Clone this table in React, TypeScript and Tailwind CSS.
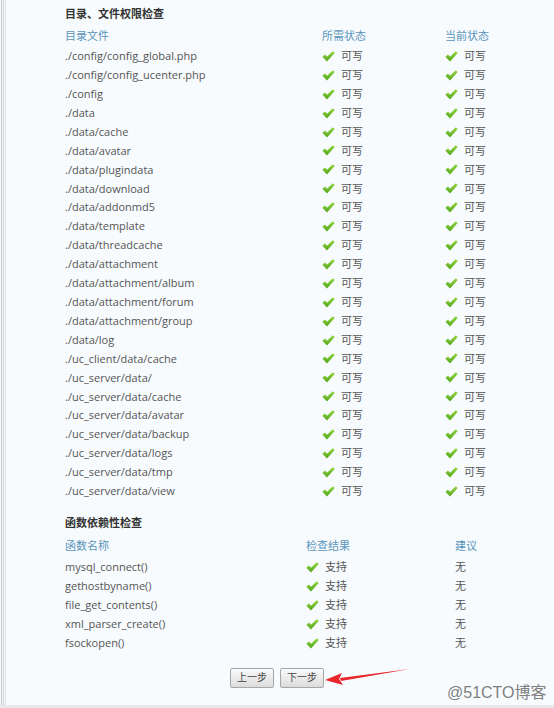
import React from "react";

const dirs = [
  "./config/config_global.php",
  "./config/config_ucenter.php",
  "./config",
  "./data",
  "./data/cache",
  "./data/avatar",
  "./data/plugindata",
  "./data/download",
  "./data/addonmd5",
  "./data/template",
  "./data/threadcache",
  "./data/attachment",
  "./data/attachment/album",
  "./data/attachment/forum",
  "./data/attachment/group",
  "./data/log",
  "./uc_client/data/cache",
  "./uc_server/data/",
  "./uc_server/data/cache",
  "./uc_server/data/avatar",
  "./uc_server/data/backup",
  "./uc_server/data/logs",
  "./uc_server/data/tmp",
  "./uc_server/data/view",
];

const funcs = [
  "mysql_connect()",
  "gethostbyname()",
  "file_get_contents()",
  "xml_parser_create()",
  "fsockopen()",
];

function Check() {
  return (
    <svg width="13" height="11" viewBox="0 0 13 11" className="shrink-0">
      <defs>
        <linearGradient id="ck" x1="0" y1="0" x2="0" y2="1">
          <stop offset="0" stopColor="#92d63f" />
          <stop offset="1" stopColor="#52a61a" />
        </linearGradient>
      </defs>
      <path d="M0.4 5.8 L3 3.5 L5 5.8 L10.8 0.2 L12.7 2 L5 10.6 Z" fill="url(#ck)" strokeLinejoin="round" />
    </svg>
  );
}

function Status({ label }: { label: string }) {
  return (
    <div className="flex items-center gap-[6px]">
      <Check />
      <span>{label}</span>
    </div>
  );
}

export default function App() {
  return (
    <div
      className="relative w-[554px] h-[708px] bg-[#f7fbfe] flex overflow-hidden text-[11px] text-[#555]"
      style={{ fontFamily: '"Open Sans", "Noto Sans CJK SC", sans-serif' }}
    >
      {/* left frame lines */}
      <div className="flex h-full shrink-0">
        <div className="w-[1px] bg-[#f7fbfe]" />
        <div className="w-[1px] bg-[#c9cdd1]" />
        <div className="w-[1px] bg-[#f0f3f5]" />
        <div className="w-[1px] bg-[#d3d7da]" />
        <div className="w-[1px] bg-[#f7fbfe]" />
        <div className="w-[1px] bg-[#dde1e4]" />
      </div>

      <div className="flex-1 pl-[59px] pt-[4px]">
        <div className="h-[19px] leading-[19px] font-bold text-[#333]">目录、文件权限检查</div>
        <div className="grid grid-cols-[257px_123px_1fr] text-[#5a94bb] h-[23px] leading-[23px] mt-[1px]">
          <span>目录文件</span>
          <span>所需状态</span>
          <span>当前状态</span>
        </div>
        <div className="mt-[0px]">
          {dirs.map((d) => (
            <div key={d} className="grid grid-cols-[257px_123px_1fr] h-[18.92px] items-center">
              <span>{d}</span>
              <Status label="可写" />
              <Status label="可写" />
            </div>
          ))}
        </div>

        <div className="mt-[12px] h-[19px] leading-[19px] font-bold text-[#333]">函数依赖性检查</div>
        <div className="grid grid-cols-[241px_149px_1fr] text-[#5a94bb] h-[23px] leading-[23px] mt-[2px]">
          <span>函数名称</span>
          <span>检查结果</span>
          <span>建议</span>
        </div>
        <div className="mt-[1px]">
          {funcs.map((f) => (
            <div key={f} className="grid grid-cols-[241px_149px_1fr] h-[19px] items-center">
              <span>{f}</span>
              <Status label="支持" />
              <span>无</span>
            </div>
          ))}
        </div>

        <div className="flex gap-[6px] mt-[15px] pl-[165px]">
          <button className="w-[44px] h-[20px] border border-[#a7a7a7] rounded-[2px] bg-gradient-to-b from-[#fafafa] to-[#dcdcdc] text-[10px] text-[#444]">
            上一步
          </button>
          <button className="w-[44px] h-[20px] border border-[#a7a7a7] rounded-[2px] bg-gradient-to-b from-[#fafafa] to-[#dcdcdc] text-[10px] text-[#444]">
            下一步
          </button>
        </div>
      </div>

      {/* red arrow annotation */}
      <svg className="absolute left-[322px] top-[666px]" width="90" height="22" viewBox="0 0 90 22">
        <path d="M88 3 L18 12 L19 15 Z" fill="#e8262a" />
        <path d="M3 14 L20 7 L17 13 L21 19 Z" fill="#e8262a" />
      </svg>

      <div
        className="absolute left-[447px] top-[681px] text-[16px] text-[#808080]"
        style={{ fontFamily: '"Liberation Sans", "Noto Sans CJK SC", sans-serif' }}
      >
        @51CTO博客
      </div>

      <div className="absolute left-0 right-0 bottom-0 h-[3px] bg-[#e6e8ea]" />
    </div>
  );
}
